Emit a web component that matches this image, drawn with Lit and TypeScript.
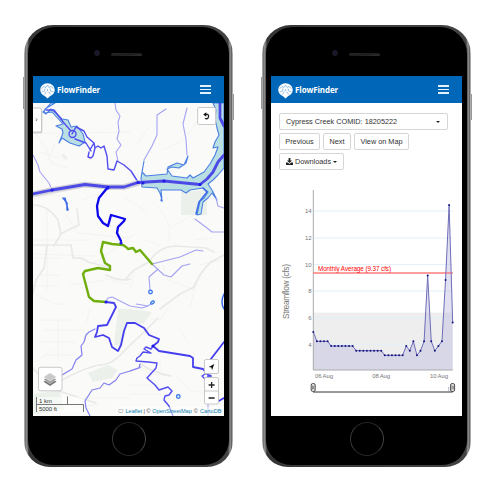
import { LitElement, html, svg, css } from "lit";
import { customElement } from "lit/decorators.js";

type Stroke = { k: string; d: string };

const ROADS: Stroke[] = [
  { k: "minor", d: "M33 133H75L130 132M124 110L112 118M33 130L45 147L52 163L68 168M40 152L58 158M55 143L48 160M33 200Q55 190 66 199M66 215L78 233L130 238M82 200L95 195M33 254L95 256M95 262L110 252L133 235M47 210V290M33 240H90M33 258H60M36 275H60M36 286H58M36 295L55 304H66M70 285L105 280M105 278L130 285M40 320H70M45 330H85M38 342H75M45 355H75M58 320V360M36 362L52 350M90 308L86 325M148 128L136 145M163 150L184 140L200 118M150 200Q176 220 168 243M148 212L125 198M145 240L160 245M162 263L168 280L195 290M200 265L222 260M196 282L190 308M135 270L130 290M146 318L160 320L170 305M140 368L152 374L170 376M160 362V374M128 385H158M130 394H160M176 375L190 390L222 396M180 330L188 342M60 375V416M74 398H130M72 408L100 404M195 240L212 238M170 228L195 214" },
  { k: "road", d: "M33 205Q48 205 58 220L61 234L54 246M47 246L44 268L36 280L33 293M33 245H71L73 258Q83 257 88 262L108 267M77 209L79 225L60 234M125 280L134 270L149 262Q158 247 175 246L206 248L214 252M106 275Q121 282 130 279M33 368L45 382L62 392L96 403M62 380Q80 370 98 365Q112 366 127 348L145 331L158 318M160 309L180 294L194 287Q200 272 211 262L224 255M33 197L84 187L130 187M141 364Q151 372 171 376" },
];

const PARKS: string[] = [
  "181,192 207,190 207,215 181,215",
  "118,309 130,309 152,312 143,324 128,322 122,347 114,345",
  "88,373 108,365 118,370 112,378 93,382",
  "34,394 60,390 64,410 34,414",
  "61,155 64,154 68,158 66,160 63,158",
];

const LAKES: string[] = [
  "M51 103L43 112L46 114L51 109L58 115L62 119L68 120L71 127L77 126L83 134L85 142L79 146L70 143L62 138L59 143L63 133L62 129L56 126L63 124L52 112L44 113L45 109L55 103Z",
  "M213 103L216 110L215 119L217 128L219 135L215 142L213 148L218 147L215 155L210 164L204 172L193 178L190 175L187 178L172 176L167 169L172 167L179 168L186 163L188 156L184 165L177 163L168 167L167 174L146 176L142 172L144 161L141 178L142 187L157 188L160 193L162 200L161 190L181 190L186 193L190 190L203 188L208 192L204 198L200 201L197 215L201 214L203 202L208 198L212 193L217 200L212 190L208 184L213 180L218 175L224 168V103Z",
];

const WATER: Stroke[] = [
  { k: "faint", d: "M115 103L116 110L120 116L118 122L119 131L117 139L121 145L116 152L118 161M33 155L38 165L40 172L49 183L52 190M166 109L157 115L157 135L152 146L144 160M187 108L183 124L186 139L187 155M195 219L207 228L212 232L224 232M216 198L218 206L224 208M152 264L180 257L196 250L203 251M152 264L164 275L171 277L182 266L190 264M158 269L149 277L150 290M106 302L108 298L112 297L130 306L142 308L148 306L152 303M141 367L130 371M208 378V416M136 304L148 306" },
  { k: "stream", d: "M95 329L89 332L86 335L84 342L81 346L82 355L76 360L72 369L62 375M140 364L139 368L130 371L120 374L116 380L109 385L104 383L100 388L92 390L85 401L86 408L90 416" },
  { k: "creek", d: "M72 134L76 127L84 131L87 137L94 143L91 148L90 150M94 143L95 148L93 156L91 158L88 157L89 152M95 148L98 146L101 148L104 146L107 156L108 169L114 170L117 161L124 165L131 171L138 182M69 134A3.4 3.4 0 1 0 76 134A3.4 3.4 0 1 0 69 134M46 110L54 110L64 123L71 131M75 139L86 143L91 151" },
  { k: "main", d: "M106 302L114 303L116 307L113 313L109 321L107 325L98 326L97 332L95 337L103 335L109 338L112 347L118 351L121 345L124 331L127 323L135 323L144 328L149 335L159 339L158 342L153 346L159 351L190 356L193 358L193 367L203 369L208 375L211 376M224 342L207 364M217 402L224 398" },
  { k: "creek", d: "M153 346L151 349L146 347L144 349L151 353L143 352L140 356L137 358L136 361L148 362L157 363L156 368L147 378L155 385L159 390L168 387L172 391L169 395L165 396L164 400L169 406L173 416M208 372L202 376L205 379L210 375V379" },
  { k: "river-casing", d: "M33 194L52 190L85 184.5L108 187L124 187L138 183" },
  { k: "river", d: "M33 194L52 190L85 184.5L108 187L124 187L138 182.5L164 181L200 184.5L207 179L213 172L218 162L224 155M220 103L220 118L224 126" },
  { k: "path-blue", d: "M108 187L99 198L97 206L98 216L103 223L108 226L111 215L118 217L125 219L124 221L118 227L117 233L121 241" },
  { k: "path-green", d: "M152 264L146 257L140 250L136 252L133 248L128 249L126 247L123 245L112 244L103 242L101 251L105 263L110 266L110 270L98 268L85 271L83 274L89 297L94 301L106 302" },
  { k: "brook", d: "M63 198L67 203L67 210M65 198L68 210M203 188L207 192L199 202L196 214M161 200L162 201M224 294Q220 302 224 309" },
];

const NODES: [number, number][] = [
  [138, 182.5], [143, 183], [164, 181], [200, 184.5], [108, 188], [121, 243], [52, 190], [106, 302], [153, 346],
];

const FLOW: number[] = [
  332, 341.3, 341.3, 341.3, 341.3, 346, 346, 346, 346, 346, 346, 346,
  350.7, 350.7, 350.7, 350.7, 350.7, 350.7, 350.7, 350.7,
  355.3, 355.3, 355.3, 355.3, 355.3, 355.3, 346, 350.7, 341.3, 355.3,
  350.7, 341.3, 275.5, 341.3, 350.7, 346, 341.3, 280, 205, 322.5,
];

const header = () => html`
  <header class="bar">
    <svg class="logo" viewBox="0 0 15 16">
      <path class="globe" d="M7.5 .3C3.4 .3 .3 3.3 .3 7C.3 10.4 3 12 5 13.3Q6.6 14.4 7.5 15.6Q8.4 14.4 10 13.3C12 12 14.7 10.4 14.7 7C14.7 3.3 11.6 .3 7.5 .3Z"></path>
      <path class="lines" d="M1.5 5.5L4 3.5L6 4.5L7.5 2L9 4.5L11 3.5L13.5 5.5M1.5 9L4.5 8L5 5.5M13.5 9L10.5 8L10 5.5M7.5 6V8M4.5 11.5L6.3 8.5M10.5 11.5L8.7 8.5"></path>
    </svg>
    <span class="brand">FlowFinder</span>
    <span class="burger"><i></i><i></i><i></i></span>
  </header>`;

@customElement("phone-frame")
export class PhoneFrame extends LitElement {
  static styles = css`
    :host { display: block; width: 209px; height: 442px; flex: none; position: relative; }
    .shell { box-sizing: border-box; height: 100%; padding: 2px 4px 2px 4px; border-radius: 29px 29px 26px 26px;
      background: linear-gradient(90deg, #bbb 0, #777 1.5px, #999 3px, #333 5px, #444 204px, #999 206px, #666 207.5px, #ccc 209px); }
    .face { box-sizing: border-box; height: 100%; border-radius: 27px 27px 25px 25px; background: #000;
      display: flex; flex-direction: column; align-items: center; box-shadow: 0 0 1px 1px #4448; }
    .ear { height: 49px; width: 191px; flex: none; display: flex; align-items: center; }
    .camera { width: 4px; height: 4px; border-radius: 50%; background: #15152e; border: 1px solid #1c1c24; margin: 3px 0 0 61px; }
    .speaker { width: 31px; height: 3px; border-radius: 2px; margin: 5px 0 0 11px; background: linear-gradient(175deg, #292929, #1c1c1c 50%, #333); }
    .screen { width: 191px; height: 340px; flex: none; background: #fff; overflow: hidden; }
    .home { width: 32px; height: 32px; border-radius: 50%; border: 1.5px solid #242426; border-left-color: #38383b; border-right-color: #444448; margin-top: 6px; }
    .key { position: absolute; width: 1px; background: #999; }
    .left { left: -1px; top: 52px; height: 32px; }
    .right { right: -1px; top: 69px; height: 26px; }
  `;
  render() {
    return html`<span class="key left"></span><span class="key right"></span>
      <div class="shell"><div class="face">
        <div class="ear"><span class="camera"></span><span class="speaker"></span></div>
        <div class="screen"><slot></slot></div>
        <div class="home"></div>
      </div></div>`;
  }
}

@customElement("app-root")
export class AppRoot extends LitElement {
  static styles = css`
    :host { display: block; width: 500px; height: 500px; background: #fff; overflow: hidden;
      font-family: "Liberation Sans", Arial, sans-serif; }
    .stage { display: flex; gap: 29px; padding: 25px 0 0 24px; }
    .bar { box-sizing: border-box; height: 27px; background: #0067b8; display: flex; align-items: center; padding: 1px 13px 0 7px; }
    .logo { width: 15px; height: 16px; margin-top: 1px; }
    .globe { fill: #fff; }
    .lines { fill: none; stroke: #6fa8d8; stroke-width: .7; }
    .brand { color: #fff; font: 700 8px "Open Sans", sans-serif; letter-spacing: -.1px; margin-left: 2px; margin-top: -1px; flex: 1; }
    .burger { width: 11px; display: flex; flex-direction: column; gap: 2px; margin-top: -1px; }
    .burger i { height: 1.4px; background: #e6f0f8; }
    .map, .chart { display: block; width: 191px; }
    .map { height: 313px; }
    .land { fill: #fafaf8; }
    .park { fill: #ebf0eb; }
    .lake { fill: #b9dfe2; stroke: #4b7fe3; stroke-width: 1.1; stroke-linejoin: round; }
    .minor, .road, .faint, .stream, .creek, .main, .brook, .river, .river-casing, .path-blue, .path-green {
      fill: none; stroke-linejoin: round; stroke-linecap: round; }
    .minor { stroke: #f1f1ef; stroke-width: .8; }
    .road { stroke: #e9e9e7; stroke-width: 1.7; }
    .faint { stroke: #a5a3f3; stroke-width: 1.1; }
    .stream { stroke: #8380f1; stroke-width: 1.2; }
    .creek { stroke: #524df0; stroke-width: 1.4; }
    .main { stroke: #443eee; stroke-width: 1.8; }
    .brook { stroke: #3d6be8; stroke-width: 1.5; }
    .river-casing { stroke: #d0d0d8; stroke-width: 5.5; }
    .river { stroke: #4d49e6; stroke-width: 2.8; }
    .path-blue { stroke: #0d08ee; stroke-width: 2.3; }
    .path-green { stroke: #6fae0c; stroke-width: 2.4; }
    .node { fill: #211ce8; }
    .pond { fill: #d8efff; stroke: #2f6fea; stroke-width: 1.2; }
    .ctl { fill: #fff; stroke: #c3c3c3; stroke-width: .9; }
    .shade { fill: #0002; }
    .glyph { fill: none; stroke: #222; stroke-width: 1.3; }
    .chevron { fill: none; stroke: #555; stroke-width: .8; }
    .ink { fill: #111; }
    .scale { fill: #ffffff80; stroke: none; }
    .rule { fill: none; stroke: #777; stroke-width: 1; }
    .small { font-size: 6px; fill: #333; }
    .attr { font-size: 5.6px; fill: #444; }
    .link { fill: #0a7eb2; }
    .panel { padding: 10px 0 0 8px; display: grid; gap: 3px; justify-items: start; }
    .row { display: flex; gap: 3px; }
    .btn { box-sizing: border-box; height: 17px; border: 1px solid #d6d6d6; border-radius: 2px; background: #fff;
      font-size: 7.3px; line-height: 15px; color: #333; padding: 0; display: flex; align-items: center; justify-content: center; white-space: nowrap; }
    .select { width: 169px; justify-content: space-between; padding: 0 7px 0 6px; }
    .prev { width: 41px; } .next { width: 28px; } .view { width: 55px; } .down { width: 65px; gap: 2px; }
    .caret { border: 2px solid transparent; border-top-color: #222; border-bottom: 0; }
    .dl { width: 7px; height: 7px; fill: #222; }
    .chart { height: 240px; }
    .grid { stroke: #e1f0f8; stroke-width: 1; }
    .band { fill: #eee; }
    .axis { fill: none; stroke: #aaa; stroke-width: 1; }
    .area { fill: #b9b8e0; fill-opacity: .42; }
    .line { fill: none; stroke: #6f6db8; stroke-width: 1; stroke-linejoin: round; }
    .dot { fill: #14147e; }
    .avg { stroke: #ff7c7c; stroke-width: 1.5; }
    .avgtext { fill: #f00; font-size: 6.3px; }
    .tick { fill: #777; font-size: 6px; }
    .title { fill: #777; font-size: 8.4px; }
    .grip { fill: #eee; stroke: #222; stroke-width: .8; }
    .track { stroke: #333; stroke-width: 1; }
  `;

  private map() {
    return html`<svg class="map" viewBox="33 103 191 313">
      <rect class="land" x="33" y="103" width="191" height="313"></rect>
      ${PARKS.map((p) => svg`<polygon class="park" points=${p}></polygon>`)}
      ${ROADS.map((r) => svg`<path class=${r.k} d=${r.d}></path>`)}
      ${LAKES.map((d) => svg`<path class="lake" d=${d}></path>`)}
      ${WATER.map((w) => svg`<path class=${w.k} d=${w.d}></path>`)}
      <circle class="pond" cx="150.5" cy="292" r="1.8"></circle>
      <ellipse class="pond" cx="152.5" cy="302.5" rx="2" ry="1.3" transform="rotate(-35 152.5 302.5)"></ellipse>
      <circle class="pond" cx="178.3" cy="396.5" r="1.8"></circle>
      ${NODES.map(([x, y]) => svg`<circle class="node" cx=${x} cy=${y} r="1.6"></circle>`)}

      <rect class="shade" x="32" y="108.5" width="10.5" height="25" rx="2"></rect>
      <rect class="ctl" x="30" y="108" width="11.5" height="24" rx="1.5"></rect>
      <path class="chevron" d="M35.8 118.3L37 119.7L35.8 121.1"></path>

      <rect class="ctl" x="197.7" y="107.5" width="18" height="17" rx="1.5"></rect>
      <path class="glyph" d="M205 114.3H207.5A2.3 2.3 0 1 1 205 118.3"></path>
      <path class="ink" d="M203.2 114.6L206.3 112.2V116.8Z"></path>

      <rect class="ctl" x="38.5" y="367.3" width="23.5" height="23.5" rx="2"></rect>
      <path d="M50 377.5L56.5 381.7L50 386L43.5 381.7Z" fill="#777"></path>
      <path d="M50 375.2L56.5 379.4L50 383.7L43.5 379.4Z" fill="#999" stroke="#fff" stroke-width=".4"></path>
      <path d="M50 372.8L56.5 377L50 381.2L43.5 377Z" fill="#c9c9c9" stroke="#fff" stroke-width=".4"></path>

      <rect class="scale" x="36" y="397" width="48" height="14.5"></rect>
      <path class="rule" d="M36.5 397V412M36.5 404.5H83.5V412M67.5 396.5V404"></path>
      <text class="small" x="39" y="402.6" textLength="13">1 km</text>
      <text class="small" x="39" y="410.8" textLength="18">5000 ft</text>

      <rect class="scale" x="116" y="407" width="108" height="9"></rect>
      <text class="attr" x="118" y="413.3" fill-opacity=".6">CI</text>
      <text class="attr link" x="125.5" y="413.3" textLength="16.5">Leaflet</text>
      <text class="attr" x="143.5" y="413.3">|</text>
      <text class="attr" x="146.3" y="413.3">©</text>
      <text class="attr link" x="152.3" y="413.3" textLength="39.5">OpenStreetMap</text>
      <text class="attr" x="193.8" y="413.3">©</text>
      <text class="attr link" x="200" y="413.3" textLength="21.5">CartoDB</text>

      <rect class="ctl" x="204.5" y="359.5" width="14" height="14" rx="1.5"></rect>
      <path class="ink" d="M214.3 364L208.7 367L211.4 367.5L212 370.2Z"></path>
      <rect class="ctl" x="204.5" y="377.5" width="14" height="26.5" rx="1.5"></rect>
      <path class="ctl" d="M204.5 391H218.5"></path>
      <path class="glyph" d="M208.6 385H214.6M211.6 382V388M208.6 398H214.6"></path>
    </svg>`;
  }

  private chart() {
    const x = (i: number) => 313.3 + i * 3.574;
    const pts = FLOW.map((y, i) => `${x(i)},${y}`).join(" ");
    const ticks: [number, number][] = [[14, 211], [12, 238], [10, 264.4], [8, 291], [6, 317.5], [4, 344.2]];
    return html`<svg class="chart" viewBox="271 170 191 240">
      <rect class="band" x="313.3" y="312.6" width="139.5" height="57.4"></rect>
      ${ticks.map(([v, y]) => svg`<line class="grid" x1="313" x2="452.8" y1=${y} y2=${y}></line>
        <text class="tick" x="311.7" y=${y + 2.4} text-anchor="end">${v}</text>`)}
      <polygon class="area" points="313.3,370 ${pts} 452.7,370"></polygon>
      <path class="axis" d="M313.3 190V370H452.8"></path>
      <line class="avg" x1="313" x2="452.8" y1="273" y2="273"></line>
      <text class="avgtext" x="318" y="271" textLength="73">Monthly Average (9.37 cfs)</text>
      <polyline class="line" points=${pts}></polyline>
      ${FLOW.map((y, i) => svg`<circle class="dot" cx=${x(i)} cy=${y} r="1"></circle>`)}
      <text class="title" transform="translate(288.7 319) rotate(-90)" textLength="55">Streamflow (cfs)</text>
      <text class="tick" x="315" y="378.3" textLength="18">06 Aug</text>
      <text class="tick" x="372.3" y="378.3" textLength="17.7">08 Aug</text>
      <text class="tick" x="430" y="378.3" textLength="18">10 Aug</text>
      <line class="track" x1="313" x2="452.7" y1="392" y2="392"></line>
      <path d="M448.7 391V387" stroke="#9ab" stroke-width=".8"></path>
      ${[313.2, 452.6].map((g) => svg`<rect class="grip" x=${g - 2} y="383.6" width="4" height="7.8" rx="1.4"></rect>
        <path d=${`M${g - 0.6} 385.6V389.4M${g + 0.6} 385.6V389.4`} stroke="#333" stroke-width=".6"></path>`)}
    </svg>`;
  }

  render() {
    return html`<div class="stage">
      <phone-frame>${header()}${this.map()}</phone-frame>
      <phone-frame>
        ${header()}
        <div class="panel">
          <div class="btn select"><span>Cypress Creek COMID: 18205222</span><span class="caret"></span></div>
          <div class="row"><div class="btn prev">Previous</div><div class="btn next">Next</div><div class="btn view">View on Map</div></div>
          <div class="btn down"><svg class="dl" viewBox="0 0 7 7"><path d="M2.6 0H4.4V2.4H6L3.5 5L1 2.4H2.6ZM0 4.6H1.8L3.5 6L5.2 4.6H7V7H0Z"></path></svg><span>Downloads</span><span class="caret"></span></div>
        </div>
        ${this.chart()}
      </phone-frame>
    </div>`;
  }
}
